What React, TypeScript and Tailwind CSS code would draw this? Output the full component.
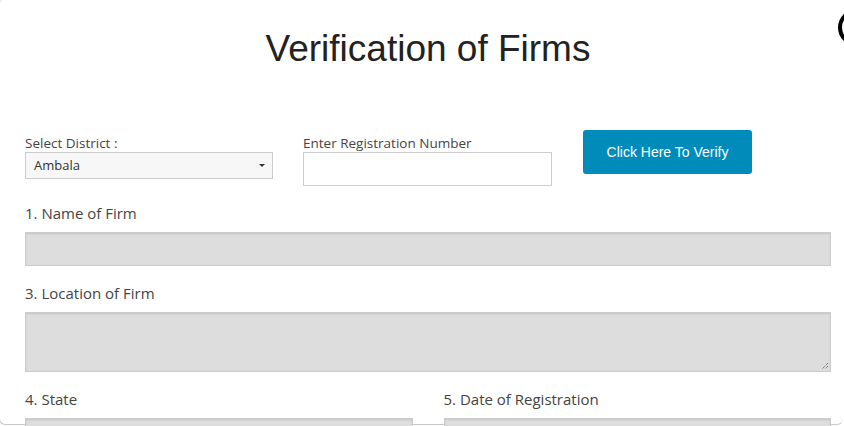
function FieldLabel({ children }: { children: string }) {
  return (
    <div className="h-[18px] text-[15px] leading-[18px] text-[#444]">{children}</div>
  );
}

function GreyInput({ className }: { className: string }) {
  return (
    <div
      className={`mt-[10px] border border-[#ccc] bg-[#dddddd] shadow-[inset_0_1px_2px_rgba(0,0,0,0.1)] ${className}`}
    />
  );
}

export default function App() {
  return (
    <div className="relative h-[426px] w-[844px] overflow-hidden bg-white font-['Open_Sans',sans-serif]">
      <div className="-ml-px h-[425px] w-[844px] rounded-b-md rounded-t-sm border border-t-0 border-r-0 border-[#c8c8c8] bg-white pl-[25px] pr-[12px]">
        <h1 className="pt-[24px] text-center font-['Liberation_Sans',Arial,sans-serif] text-[37px] leading-[50px] text-[#222]">
          Verification of Firms
        </h1>

        <div className="mt-[61px] flex items-start">
          <div className="w-[248px]">
            <div className="h-[16px] text-[13.5px] leading-[16px] text-[#444]">Select District :</div>
            <div className="mt-[1px] flex h-[27px] items-center justify-between border border-[#ccc] bg-[#f7f7f7] pl-[8px] pr-[6px] text-[13px] text-[#333]">
              <span>Ambala</span>
              <svg width="8" height="5" viewBox="0 0 8 5">
                <path d="M1 1h6L4 4z" fill="#333" />
              </svg>
            </div>
          </div>
          <div className="ml-[30px] w-[249px]">
            <div className="h-[16px] text-[13.5px] leading-[16px] text-[#444]">Enter Registration Number</div>
            <div className="mt-[1px] h-[34px] border border-[#ccc] bg-white" />
          </div>
          <button className="-mt-[5px] ml-[31px] h-[44px] w-[169px] rounded-[3px] bg-[#008cba] font-['Liberation_Sans',Arial,sans-serif] text-[14px] text-white">
            Click Here To Verify
          </button>
        </div>

        <div className="mt-[18px]">
          <FieldLabel>1. Name of Firm</FieldLabel>
          <GreyInput className="h-[34px]" />
        </div>

        <div className="mt-[18px]">
          <FieldLabel>3. Location of Firm</FieldLabel>
          <div className="relative mt-[10px] h-[60px] border border-[#ccc] bg-[#dddddd] shadow-[inset_0_1px_2px_rgba(0,0,0,0.1)]">
            <svg className="absolute bottom-[1px] right-[1px]" width="9" height="9" viewBox="0 0 9 9">
              <path d="M8 2L2 8M8 5L5 8" stroke="#555" strokeWidth="1" strokeDasharray="1 1" />
            </svg>
          </div>
        </div>

        <div className="mt-[18px] flex gap-[31px]">
          <div className="w-[388px]">
            <FieldLabel>4. State</FieldLabel>
            <GreyInput className="h-[34px]" />
          </div>
          <div className="w-[388px]">
            <FieldLabel>5. Date of Registration</FieldLabel>
            <GreyInput className="h-[34px]" />
          </div>
        </div>
      </div>
      <div className="absolute left-[838px] top-[9px] h-[37px] w-[37px] rounded-full border-[4px] border-black bg-white" />
    </div>
  );
}
